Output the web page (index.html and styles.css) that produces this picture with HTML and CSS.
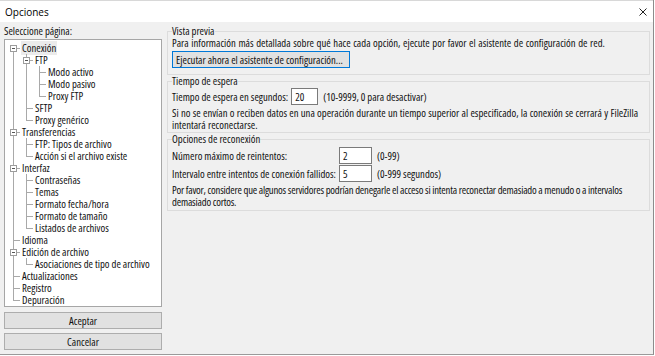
FILE: index.html
```html
<!DOCTYPE html>
<html lang="es">
<head>
  <meta charset="UTF-8" />
  <title>Opciones</title>
  <link rel="stylesheet" href="styles.css">
</head>
<body>

<div class="window">
  <div class="titlebar">
    <span class="title">Opciones</span>
    <svg class="close" width="10" height="10" viewBox="0 0 10 10"><path d="M1.5 1.5L8.5 8.5M8.5 1.5L1.5 8.5" stroke="#222" stroke-width="1" fill="none"/></svg>
  </div>

  <div class="content">
    <div class="sidebar">
      <div class="caption">Seleccione página:</div>
      <div class="tree">
        <ul>
          <li class="open"><span class="tog"></span><span class="sel">Conexión</span>
            <ul>
              <li class="open"><span class="tog"></span>FTP
                <ul>
                  <li>Modo activo</li>
                  <li>Modo pasivo</li>
                  <li>Proxy FTP</li>
                </ul>
              </li>
              <li>SFTP</li>
              <li>Proxy genérico</li>
            </ul>
          </li>
          <li class="open"><span class="tog"></span>Transferencias
            <ul>
              <li>FTP: Tipos de archivo</li>
              <li>Acción si el archivo existe</li>
            </ul>
          </li>
          <li class="open"><span class="tog"></span>Interfaz
            <ul>
              <li>Contraseñas</li>
              <li>Temas</li>
              <li>Formato fecha/hora</li>
              <li>Formato de tamaño</li>
              <li>Listados de archivos</li>
            </ul>
          </li>
          <li>Idioma</li>
          <li class="open"><span class="tog"></span>Edición de archivo
            <ul>
              <li>Asociaciones de tipo de archivo</li>
            </ul>
          </li>
          <li>Actualizaciones</li>
          <li>Registro</li>
          <li>Depuración</li>
        </ul>
      </div>
      <button class="btn">Aceptar</button>
      <button class="btn">Cancelar</button>
    </div>

    <div class="main">
      <fieldset class="group group-preview">
        <legend>Vista previa</legend>
        <p>Para información más detallada sobre qué hace cada opción, ejecute por favor el asistente de configuración de red.</p>
        <button class="btn btn-default">Ejecutar ahora el asistente de configuración...</button>
      </fieldset>

      <fieldset class="group">
        <legend>Tiempo de espera</legend>
        <div class="row">
          <span>Tiempo de espera en segundos:</span>
          <input class="num num-sm" type="text" value="20">
          <span>(10-9999, 0 para desactivar)</span>
        </div>
        <p class="note">Si no se envían o reciben datos en una operación durante un tiempo superior al especificado, la conexión se cerrará y FileZilla<br>intentará reconectarse.</p>
      </fieldset>

      <fieldset class="group group-retry">
        <legend>Opciones de reconexión</legend>
        <div class="grid">
          <span>Número máximo de reintentos:</span>
          <input class="num" type="text" value="2">
          <span>(0-99)</span>
          <span>Intervalo entre intentos de conexión fallidos:</span>
          <input class="num" type="text" value="5">
          <span>(0-999 segundos)</span>
        </div>
        <p class="note note-tight">Por favor, considere que algunos servidores podrían denegarle el acceso si intenta reconectar demasiado a menudo o a intervalos<br>demasiado cortos.</p>
      </fieldset>
    </div>
  </div>
</div>

</body>
</html>
```
FILE: styles.css
```css
* { box-sizing: border-box; }
body { margin: 0; background: #fff; font-family: 'Open Sans', sans-serif; font-size: 10.7px; font-stretch: 75%; color: #111; }

.window { width: 654px; height: 355px; background: #f0f0f0; border-right: 1px solid #8c8c8c; border-bottom: 1px solid #9a9a9a; display: flex; flex-direction: column; }
.titlebar { height: 22px; background: #fff; border-top: 1px solid #d8d8d8; display: flex; align-items: center; justify-content: space-between; padding: 0 5px 0 5px; }
.title { font-size: 10px; font-stretch: 100%; color: #000; }
.close { display: block; }

.content { flex: 1; display: flex; gap: 5px; padding: 3px 3px 4px 4px; min-height: 0; }

.sidebar { flex: 0 0 158px; display: flex; flex-direction: column; }
.caption { line-height: 12px; }
.tree { flex: 1; margin-top: 2px; background: #fff; border: 1px solid #a6a6a6; overflow: hidden; }
.tree ul { list-style: none; margin: 0; padding: 0 0 0 4px; }
.tree > ul { padding: 2px 0 0 8px; }
.tree li { position: relative; padding-left: 9px; line-height: 12px; white-space: nowrap; }
.tree li::before { content: ''; position: absolute; left: 0; top: 0; bottom: 0; border-left: 1px solid #a9a9a9; }
.tree li:last-child::before { bottom: auto; height: 6px; }
.tree > ul > li:first-child::before { top: 6px; }
.tree li::after { content: ''; position: absolute; left: 0; top: 6px; width: 7px; border-top: 1px solid #a9a9a9; }
.tog { position: absolute; left: -3px; top: 3px; width: 7px; height: 7px; border: 1px solid #9c9c9c; background: #fff; z-index: 1; }
.tog::after { content: ''; position: absolute; left: 1px; top: 2px; width: 3px; height: 1px; background: #555; }
.sel { background: #ebebeb; padding: 0 1px; margin-left: -1px; }

.btn { font: inherit; color: #111; background: #e1e1e1; border: 1px solid #adadad; height: 17px; padding: 0 5px; line-height: 14px; }
.sidebar .btn { width: 100%; margin-top: 5px; }
.sidebar .btn + .btn { margin-top: 4px; }
.btn-default { display: block; border-color: #0078d7; margin-top: 2px; padding: 0 6px 0 3px; }

.main { flex: 1; min-width: 0; display: flex; flex-direction: column; }
.group { margin: 0; padding: 0 4px 1px 4px; border: 1px solid #dcdcdc; min-width: 0; }
.group-preview { padding-bottom: 6px; }
.group-retry { padding-bottom: 2px; }
.group legend { padding: 0; line-height: 12px; }
.group p { margin: 0; line-height: 12px; word-spacing: 0.6px; }
.group .note { margin-top: 2px; white-space: nowrap; word-spacing: 0.3px; }
.group .note-tight { word-spacing: 0; letter-spacing: -0.2px; }

.row { display: flex; align-items: center; gap: 3px; margin-top: 1px; }
.row span:last-child { margin-left: 2px; }
.grid { display: grid; grid-template-columns: max-content 33px max-content; align-items: center; column-gap: 3px; row-gap: 1px; margin-top: 2px; }
.grid span:nth-child(3n) { margin-left: 2px; }

.num { font: inherit; color: #111; height: 17px; background: #fff; border: 1px solid #7a7a7a; padding: 0 3px; margin: 0; outline: none; }
.num-sm { width: 27px; }
.grid .num { width: 33px; }
```
